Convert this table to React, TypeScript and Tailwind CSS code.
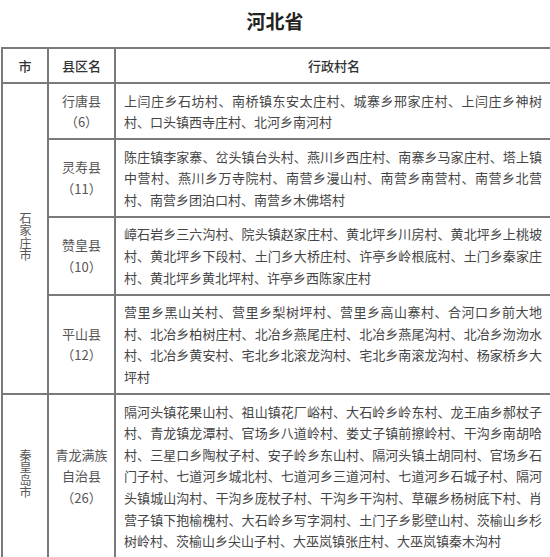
interface County {
  name: string[];
  count: number;
  villages: string[];
}

interface City {
  name: string;
  counties: County[];
}

const DATA: City[] = [
  {
    name: '石家庄市',
    counties: [
      {
        name: ['行唐县'],
        count: 6,
        villages: ['上闫庄乡石坊村', '南桥镇东安太庄村', '城寨乡邢家庄村', '上闫庄乡神树村', '口头镇西寺庄村', '北河乡南河村'],
      },
      {
        name: ['灵寿县'],
        count: 11,
        villages: ['陈庄镇李家寨', '岔头镇台头村', '燕川乡西庄村', '南寨乡马家庄村', '塔上镇中营村', '燕川乡万寺院村', '南营乡漫山村', '南营乡南营村', '南营乡北营村', '南营乡团泊口村', '南营乡木佛塔村'],
      },
      {
        name: ['赞皇县'],
        count: 10,
        villages: ['嶂石岩乡三六沟村', '院头镇赵家庄村', '黄北坪乡川房村', '黄北坪乡上桃坡村', '黄北坪乡下段村', '土门乡大桥庄村', '许亭乡岭根底村', '土门乡秦家庄村', '黄北坪乡黄北坪村', '许亭乡西陈家庄村'],
      },
      {
        name: ['平山县'],
        count: 12,
        villages: ['营里乡黑山关村', '营里乡梨树坪村', '营里乡高山寨村', '合河口乡前大地村', '北冶乡柏树庄村', '北冶乡燕尾庄村', '北冶乡燕尾沟村', '北冶乡沕沕水村', '北冶乡黄安村', '宅北乡北滚龙沟村', '宅北乡南滚龙沟村', '杨家桥乡大坪村'],
      },
    ],
  },
  {
    name: '秦皇岛市',
    counties: [
      {
        name: ['青龙满族', '自治县'],
        count: 26,
        villages: ['隔河头镇花果山村', '祖山镇花厂峪村', '大石岭乡岭东村', '龙王庙乡郝杖子村', '青龙镇龙潭村', '官场乡八道岭村', '娄丈子镇前擦岭村', '干沟乡南胡哈村', '三星口乡陶杖子村', '安子岭乡东山村', '隔河头镇土胡同村', '官场乡石门子村', '七道河乡城北村', '七道河乡三道河村', '七道河乡石城子村', '隔河头镇城山沟村', '干沟乡庞杖子村', '干沟乡干沟村', '草碾乡杨树底下村', '肖营子镇下抱榆槐村', '大石岭乡写字洞村', '土门子乡影壁山村', '茨榆山乡杉树岭村', '茨榆山乡尖山子村', '大巫岚镇张庄村', '大巫岚镇秦木沟村'],
      },
    ],
  },
];

const cell = 'border-2 border-[#7a7a7a]';

export default function App() {
  return (
    <div className="h-[557px] w-[550px] overflow-hidden bg-white font-['Noto_Sans_CJK_SC','Noto_Sans',sans-serif]">
      <h1 className="h-[47px] pt-[9px] text-center text-[19px] leading-[24px] font-bold text-[#222]">河北省</h1>

      <table className="ml-px table-fixed border-collapse text-[13px] w-[551px]">
        <colgroup>
          <col className="w-[46px]" />
          <col className="w-[67px]" />
          <col className="w-[438px]" />
        </colgroup>
        <thead>
          <tr className="h-[35px] text-[#333]">
            <th className={`${cell} font-medium`}>市</th>
            <th className={`${cell} font-medium`}>县区名</th>
            <th className={`${cell} font-medium`}>行政村名</th>
          </tr>
        </thead>
        <tbody className="text-[#454545]">
          {DATA.map(city =>
            city.counties.map((county, i) => (
              <tr key={county.name.join('')}>
                {i === 0 && (
                  <td rowSpan={city.counties.length} className={`${cell} text-center align-middle text-[12px] text-[#555]`}>
                    <span className="inline-block leading-[16px] tracking-[0.5px] [writing-mode:vertical-rl]">{city.name}</span>
                  </td>
                )}
                <td className={`${cell} text-center text-[#555] leading-[21.6px]`}>
                  {county.name.map(n => (
                    <span key={n} className="block">{n}</span>
                  ))}
                  <span className="block">（{county.count}）</span>
                </td>
                <td className={`${cell} py-[5.5px] pl-[8px] pr-[10px] text-justify leading-[21.6px]`}>
                  {county.villages.join('、')}
                </td>
              </tr>
            ))
          )}
        </tbody>
      </table>
    </div>
  );
}
